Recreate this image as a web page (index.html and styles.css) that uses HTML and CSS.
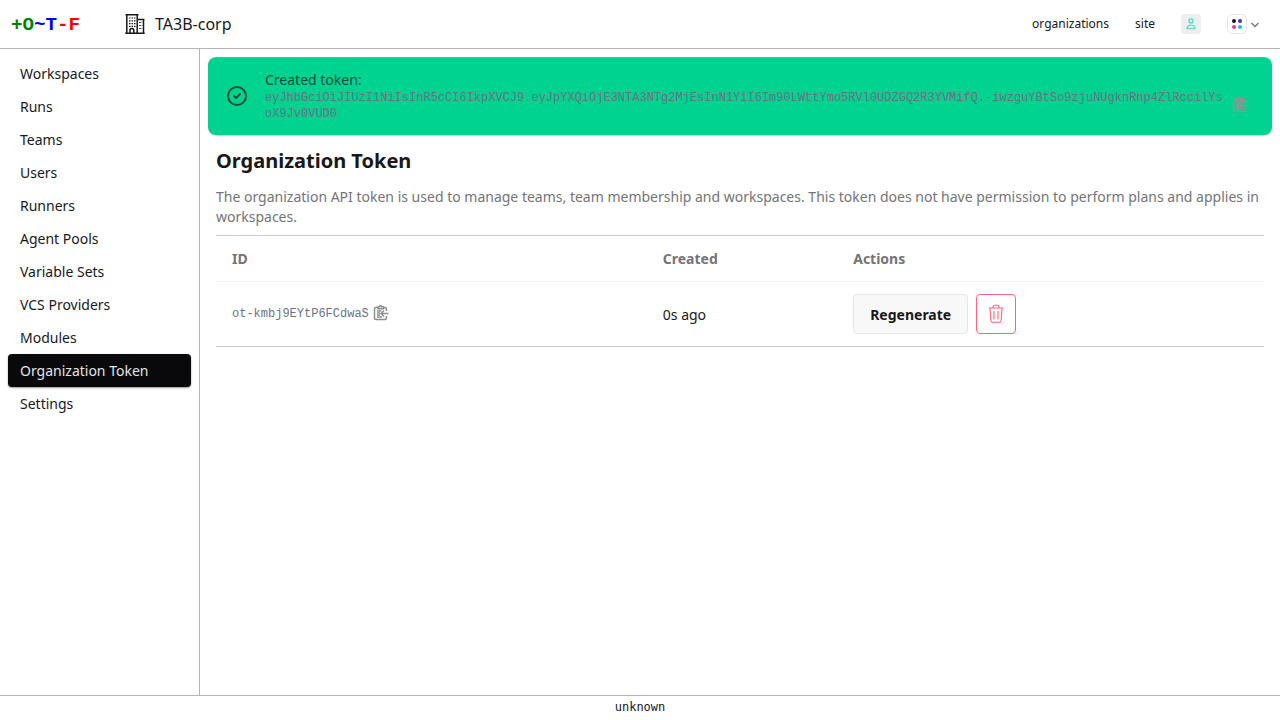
FILE: index.html
```html
<!DOCTYPE html>
<html lang="en">
<head>
<meta charset="utf-8">
<title>Organization Token</title>
<link rel="stylesheet" href="styles.css">
</head>
<body>
<svg class="defs" width="0" height="0" aria-hidden="true">
  <symbol id="clip" viewBox="0 0 16 16">
    <path d="M4.500 2.500H3A1.500 1.500 0 0 0 1.500 4v9A1.500 1.500 0 0 0 3 14.500h9a1.500 1.500 0 0 0 1.500-1.500V11M10.500 2.500H12A1.500 1.500 0 0 1 13.500 4v2M5 1.700h1.500a1 1 0 0 1 2 0H10.500v2.100H5zM4 6h4.500M4 8h3M4 10h3M4 12h5M15.500 8.500H8.500M11 5.500l-3 3 3 3"/>
  </symbol>
</svg>
<header class="topbar">
  <a class="logo"><span class="green">+O</span><span class="blue">~T</span><span class="red">-F</span></a>
  <svg class="building" viewBox="0 0 20 20">
    <path d="M.5 .8h13M1.800 .8v18.200M12.200 .8v18.200M.3 19.200h19.400M12 5.500h7.500M18.500 5.500v13.500M5 19v-3.300q0-1.200 1.900-1.200t1.900 1.200V19"/>
    <path class="dots" d="M4 4h6.500M4 6.800h6.500M4 9.600h6.500M4 12.400h6.500M14.200 8.500h3M14.200 11.500h3M14.200 14.500h3"/>
  </svg>
  <span class="org">TA3B-corp</span>
  <nav class="links">
    <a class="link-orgs">organizations</a>
    <a class="link-site">site</a>
    <span class="avatar"><svg viewBox="0 0 20 20"><circle cx="10" cy="6.900" r="2"/><path d="M6.500 14.800c-.6 0-.7-.8-.4-1.600.6-1.500 2-2.200 3.900-2.200s3.300.7 3.900 2.200c.3.800.2 1.600-.4 1.600z"/></svg></span>
    <span class="theme"><i class="c1"></i><i class="c2"></i><i class="c3"></i><i class="c4"></i></span>
    <svg class="chev" viewBox="0 0 8 6"><path d="M.5 1l3.500 3.500L7.500 1"/></svg>
  </nav>
</header>
<div class="body">
  <aside class="menu">
    <a>Workspaces</a><a>Runs</a><a>Teams</a><a>Users</a><a>Runners</a><a>Agent Pools</a><a>Variable Sets</a><a>VCS Providers</a><a>Modules</a><a class="active">Organization Token</a><a>Settings</a>
  </aside>
  <main>
    <div class="alert">
      <svg class="check" viewBox="0 0 24 24"><path d="M9 12l2 2 4-4m6 2a9 9 0 1 1-18 0 9 9 0 0 1 18 0z"/></svg>
      <div class="message">
        <div>Created token:</div>
        <div class="token-row"><span class="mono">eyJhbGciOiJIUzI1NiIsInR5cCI6IkpXVCJ9.eyJpYXQiOjE3NTA3NTg2MjEsInN1YiI6Im90LWttYmo5RVl0UDZGQ2R3YVMifQ.-iwzguYBtSo9zjuNUgknRnp4ZlRccilYsoX9Jv0VUD0</span><svg class="clip"><use href="#clip"/></svg></div>
      </div>
    </div>
    <section class="content">
      <h1>Organization Token</h1>
      <p>The organization API token is used to manage teams, team membership and workspaces. This token does not have permission to perform plans and applies in workspaces.</p>
      <div class="table">
        <div class="row head"><span>ID</span><span>Created</span><span>Actions</span></div>
        <div class="row data">
          <div class="id"><span class="mono">ot-kmbj9EYtP6FCdwaS</span><svg class="clip"><use href="#clip"/></svg></div>
          <span class="age">0s ago</span>
          <div class="actions">
            <button class="regen">Regenerate</button>
            <button class="delete" aria-label="Delete"><svg viewBox="0 0 16 20"><path d="M.8 4h14.400M5 3.800V3q0-1.700 1.700-1.700h2.600Q11 1.300 11 3v.8M2 4.200l.8 12.300q.1 1.700 1.700 1.700h7q1.600 0 1.700-1.700L14 4.200M6 7v8.500M10 7v8.500"/></svg></button>
          </div>
        </div>
      </div>
    </section>
  </main>
</div>
<footer>unknown</footer>
</body>
</html>
```
FILE: styles.css
```css
* { box-sizing: border-box; }
body { margin: 0; height: 720px; display: flex; flex-direction: column; overflow: hidden; font: 14px/20px "Noto Sans", sans-serif; color: #18181b; background: #fff; }
svg { fill: none; stroke: currentColor; flex: none; }
.defs { position: absolute; }
.topbar { height: 49px; flex: none; border-bottom: 1px solid #b5b5b5; display: flex; align-items: center; }
.logo { width: 71px; margin-left: 11px; padding-top: 2px; font: bold 19.2px/24px "Liberation Mono", monospace; }
.green { color: #008000; }
.blue { color: #00f; }
.red { color: #f00; }
.building { width: 20px; height: 20px; margin-left: 43px; stroke-width: 1.500; }
.dots { stroke-dasharray: 1.500 1; stroke-width: 1.200; }
.org { margin-left: 10px; font-size: 16px; line-height: 24px; }
.links { margin-left: auto; display: flex; align-items: center; font-size: 12px; line-height: 20px; padding-right: 21px; }
.link-site { margin-left: 26px; }
.avatar { width: 20px; height: 20px; margin-left: 26px; border-radius: 3px; background: #eee; color: #36d9c4; }
.avatar svg { display: block; width: 20px; height: 20px; stroke-width: 1.100; }
.theme { width: 20px; height: 20px; margin-left: 26px; border: 1px solid #e5e5e5; border-radius: 5px; display: grid; grid-template-columns: 4px 4px; gap: 2px; align-content: center; justify-content: center; }
.theme i { width: 4px; height: 4px; border-radius: 50%; }
.c1 { background: #18181b; }
.c2 { background: #422ad5; }
.c3 { background: #f43098; }
.c4 { background: #00d3bb; }
.chev { width: 8px; height: 6px; margin: 1px 0 0 4px; color: #777; stroke-width: 1.500; }
.body { flex: 1; display: flex; min-height: 0; }
.menu { width: 200px; flex: none; border-right: 1px solid #b5b5b5; padding: 8px; display: flex; flex-direction: column; }
.menu a { height: 33px; padding: 6px 12px; line-height: 21px; border-radius: 4px; }
.menu .active { color: #e4e4e7; background: #09090b; box-shadow: 0 1px 2px rgba(0,0,0,.4); }
main { flex: 1; padding: 8px; min-width: 0; }
.alert { height: 78px; border-radius: 8px; background: #00d390; color: #004c39; padding: 0 20px 0 17px; display: flex; align-items: center; box-shadow: inset 0 1px rgba(255,255,255,.12), 0 1px 1px rgba(0,0,0,.15); }
.check { width: 24px; height: 24px; stroke-width: 2; stroke-linecap: round; stroke-linejoin: round; }
.message { flex: 1; margin-left: 16px; min-width: 0; line-height: 18px; }
.token-row { display: flex; align-items: center; justify-content: space-between; }
.mono { font: 12px/16px "Liberation Mono", monospace; color: #6a7282; word-break: break-all; }
.token-row .mono { width: 959px; margin: 1px 0 -1px; }
.clip { width: 16px; height: 16px; color: #8d8d8d; stroke-width: 1.450; }
.token-row .clip { margin-right: 4px; color: #9c8e94; }
.content { padding: 16px 8px; }
h1 { margin: 0 0 16px; font-size: 20px; line-height: 20px; font-weight: 700; }
p { margin: 0 0 8px; color: #747476; line-height: 20px; }
.table { border-top: 1px solid #ccc; border-bottom: 1px solid #ccc; }
.row { display: grid; grid-template-columns: 430.800px 190.400px 1fr; padding: 0 16px; align-items: center; }
.head { height: 46px; font-weight: 700; color: #747476; border-bottom: 1px solid #f2f2f2; }
.data { height: 64px; }
.id { display: flex; align-items: center; gap: 4.500px; padding-bottom: 2px; }
.id .mono { padding-top: 1px; }
.age { padding-top: 2px; }
.actions { display: flex; gap: 8px; }
button { height: 40px; border-radius: 4px; font: 700 14px/20px "Noto Sans", sans-serif; color: #18181b; padding: 0; }
.regen { width: 115px; background: #f8f8f8; border: 1px solid #e6e6e6; padding-top: 2px; }
.delete { width: 40px; border: 1px solid #ff637d; background: #fff; color: #ff637d; display: flex; align-items: center; justify-content: center; }
.delete svg { width: 16px; height: 20px; stroke-width: 1.100; }
footer { height: 25px; flex: none; border-top: 1px solid #b5b5b5; text-align: center; font: 12px/22px "DejaVu Sans Mono", monospace; }
```
